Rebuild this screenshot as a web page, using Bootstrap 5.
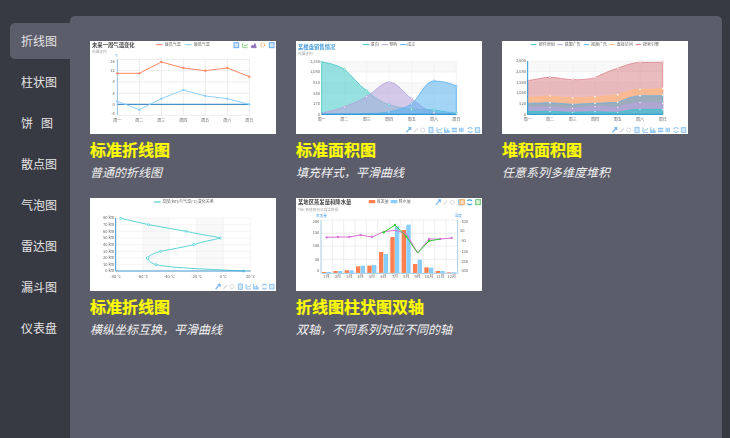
<!DOCTYPE html>
<html lang="zh">
<head>
<meta charset="utf-8">
<title>图表示例</title>
<link href="https://cdn.jsdelivr.net/npm/bootstrap@5.3.0/dist/css/bootstrap.min.css" rel="stylesheet">
<style>
html,body{height:100%;overflow:hidden}
body{background:#383a43;font-family:"Noto Sans CJK SC","Liberation Sans",sans-serif}
.shell{height:438px;width:730px;padding:16px 8px 0 0}
.side-rail{width:70px;padding:7px 0 0 10px;flex:none}
.side-link{display:block;width:60px;height:36px;line-height:36px;margin-bottom:5px;padding-left:11px;font-size:12px;color:#e4e4e4;border-radius:5px 0 0 5px;text-decoration:none;white-space:pre}
.side-link.current{background:#5c5d6a}
.main-panel{background:#5c5d6a;border-radius:5px 5px 0 0;width:652px;padding:25px 0 0 20px}
.chart-grid{display:grid;grid-template-columns:repeat(3,186px);column-gap:20px;row-gap:0}
.chart-item{height:157px}
.chart-pic{display:block;width:186px;height:93px;background:#fff;filter:blur(.3px)}
.chart-name{color:#ff0;font-size:16px;font-weight:700;line-height:22px;margin:4px 0 0;-webkit-text-stroke:.2px #ff0}
.chart-note{color:#f2f2f2;font-size:12px;font-style:italic;line-height:17px;margin:3px 0 0}
.chart-pic text{font-family:"Noto Sans CJK SC","Liberation Sans",sans-serif;font-size:12px;fill:#666}
.chart-pic text.ttl{font-size:16px;font-weight:700;fill:#444}
.chart-pic text.sub{font-size:11px;fill:#aaa}
.chart-pic text.ttl-blue{fill:#4a9fdc}
.chart-pic text.unit{font-size:11px;fill:#5aa6e6}
</style>
</head>
<body>
<svg width="0" height="0" class="d-block position-absolute">
<defs>
<g id="tools-a" fill="#d6e9fb" stroke="#92c6f2" stroke-width="3">
<path d="M2 16 14 3M8 2h7v7" fill="none" stroke="#7fb9ec" stroke-width="4"/><path d="M25 16 36 4" fill="none" stroke="#dcdcdc" stroke-width="4"/><circle cx="51" cy="9" r="6" fill="none" stroke="#dcdcdc"/>
<rect x="70" y="1" width="12" height="16"/>
</g>
<g id="tools-b" fill="none" stroke="#92c6f2" stroke-width="3">
<path d="M1 1v15h15M3 12l5-5 3 3 5-7"/><path d="M24 1v15h15M28 15V8M33 15V4M37 15V10" stroke-width="3.5"/>
</g>
<g id="tools-c" fill="none" stroke="#92c6f2" stroke-width="3.5">
<path d="M0 4h16M0 9h16M0 14h16"/><path d="M24 2v14M29 2v14M34 2v14"/>
</g>
<g id="tools-d" fill="none" stroke="#92c6f2" stroke-width="3">
<path d="M2 6a7 7 0 0 1 13 0M15 12a7 7 0 0 1-13 0" stroke-width="3.5"/><rect x="24" y="2" width="13" height="14" fill="#d6e9fb"/>
</g>
</defs>
</svg>
<div class="shell d-flex">
<nav class="side-rail">
<a class="side-link current" href="#">折线图</a>
<a class="side-link" href="#">柱状图</a>
<a class="side-link" href="#">饼&nbsp;&nbsp;&nbsp;图</a>
<a class="side-link" href="#">散点图</a>
<a class="side-link" href="#">气泡图</a>
<a class="side-link" href="#">雷达图</a>
<a class="side-link" href="#">漏斗图</a>
<a class="side-link" href="#">仪表盘</a>
</nav>
<main class="main-panel">
<div class="chart-grid">

<div class="chart-item">
<svg class="chart-pic" viewBox="270 123 558 279">
<g stroke="#e8e8e8" stroke-width="2.5" fill="none"><path d="M352 178H748M352 212H748M352 246H748M352 280H748M352 346H748M418 178V346M484 178V346M550 178V346M616 178V346M682 178V346M748 178V346"/></g>
<path d="M352 178V346" stroke="#8fc0e0" stroke-width="3"/>
<path d="M352 313H748" stroke="#4a90c4" stroke-width="3.5"/>
<path d="M352 220 418 220 484 186 550 204 616 212 682 204 748 230" fill="none" stroke="#ff8a65" stroke-width="3"/>
<g fill="#ff8a65"><circle cx="352" cy="220" r="3.5"/><circle cx="418" cy="220" r="3.5"/><circle cx="484" cy="186" r="3.5"/><circle cx="550" cy="204" r="3.5"/><circle cx="616" cy="212" r="3.5"/><circle cx="682" cy="204" r="3.5"/><circle cx="748" cy="230" r="3.5"/></g>
<path d="M352 304 418 329 484 296 550 270 616 288 682 296 748 313" fill="none" stroke="#90d0fa" stroke-width="3"/>
<g fill="#90d0fa"><circle cx="352" cy="304" r="3.5"/><circle cx="418" cy="329" r="3.5"/><circle cx="484" cy="296" r="3.5"/><circle cx="550" cy="270" r="3.5"/><circle cx="616" cy="288" r="3.5"/><circle cx="682" cy="296" r="3.5"/><circle cx="748" cy="313" r="3.5"/></g>
<text class="ttl" x="276" y="142">未来一周气温变化</text><text class="sub" x="276" y="160">纯属虚构</text>
<text class="unit" x="344" y="171">°C</text>
<path d="M468 134h20" stroke="#ff8a65" stroke-width="3"/><text x="494" y="139">最高气温</text>
<path d="M555 134h20" stroke="#90d0fa" stroke-width="3"/><text x="581" y="139">最低气温</text>
<g text-anchor="end"><text x="344" y="190">16</text><text x="344" y="216">12</text><text x="344" y="250">8</text><text x="344" y="284">4</text><text x="344" y="317">0</text><text x="344" y="345">-4</text></g>
<g text-anchor="middle"><text x="352" y="365">周一</text><text x="418" y="365">周二</text><text x="484" y="365">周三</text><text x="550" y="365">周四</text><text x="616" y="365">周五</text><text x="682" y="365">周六</text><text x="748" y="365">周日</text></g>
<rect x="702" y="128" width="14" height="15" fill="#cfe5fb" stroke="#6aaeea" stroke-width="3"/>
<path d="M728 128v15h15M731 139l4-4 3 3 5-7" fill="none" stroke="#8bdc8b" stroke-width="3"/>
<path d="M754 143v-4l4-4 3 3 4-8 4 13Z" fill="#8f6bb5" stroke="#8f6bb5" stroke-width="2"/>
<circle cx="788" cy="135" r="6" fill="none" stroke="#f0a860" stroke-width="3.5" stroke-dasharray="3 2"/>
<rect x="808" y="128" width="14" height="15" fill="#cfe5fb" stroke="#6aaeea" stroke-width="3"/>
</svg>
<h3 class="chart-name">标准折线图</h3>
<p class="chart-note">普通的折线图</p>
</div>

<div class="chart-item">
<svg class="chart-pic" viewBox="18 33 558 279">
<path d="M95 94H499V126H95ZM95 158H499V190H95Z" fill="#f8f8f8"/>
<g stroke="#eee" stroke-width="2" fill="none"><path d="M95 94H499M95 126H499M95 158H499M95 190H499M95 222H499M163 94V253M230 94V253M297 94V253M365 94V253M432 94V253M499 94V253"/></g>
<path d="M95 96C125 100 145 108 163 118C185 135 205 165 230 182C255 202 275 218 297 224C325 232 345 236 365 238C390 239 410 238 432 240C460 244 480 248 499 250V253H95Z" fill="#5fd3cf" fill-opacity=".65" stroke="#45c8c4" stroke-width="2.5"/>
<path d="M95 250C120 244 140 238 163 231C185 222 208 212 230 200C255 185 275 157 297 157C325 157 340 190 365 206C390 226 410 242 432 248C460 250 480 250 499 250V253H95Z" fill="#b9a6dc" fill-opacity=".6" stroke="#b6a2de" stroke-width="2.5"/>
<path d="M95 253 163 252C185 252 210 252 230 251C255 250 275 250 297 246C325 240 345 234 365 222C390 200 405 153 432 153C460 153 480 160 499 168V253H95Z" fill="#5ab1ef" fill-opacity=".55" stroke="#5ab1ef" stroke-width="2.5"/>
<g fill="#fff" stroke="#45c8c4" stroke-width="2"><circle cx="95" cy="96" r="3"/><circle cx="163" cy="118" r="3"/><circle cx="230" cy="182" r="3"/><circle cx="297" cy="224" r="3"/><circle cx="365" cy="238" r="3"/><circle cx="432" cy="240" r="3"/><circle cx="499" cy="250" r="3"/></g>
<g fill="#fff" stroke="#b6a2de" stroke-width="2"><circle cx="163" cy="231" r="3"/><circle cx="230" cy="200" r="3"/><circle cx="297" cy="157" r="3"/><circle cx="365" cy="206" r="3"/><circle cx="432" cy="248" r="3"/></g>
<g fill="#fff" stroke="#5ab1ef" stroke-width="2"><circle cx="297" cy="246" r="3"/><circle cx="365" cy="222" r="3"/><circle cx="432" cy="153" r="3"/><circle cx="499" cy="168" r="3"/></g>
<path d="M95 253H499" stroke="#2b9bd8" stroke-width="4"/>
<text class="ttl ttl-blue" x="24" y="56">某楼盘销售情况</text><text class="sub" x="24" y="75">纯属虚构</text>
<path d="M218 44h20" stroke="#45c8c4" stroke-width="3"/><text x="242" y="49">意向</text>
<path d="M275 44h20" stroke="#b6a2de" stroke-width="3"/><text x="298" y="49">预购</text>
<path d="M330 44h20" stroke="#5ab1ef" stroke-width="3"/><text x="352" y="49">成交</text>
<g text-anchor="end"><text x="90" y="98">1,350</text><text x="90" y="130">1,080</text><text x="90" y="162">810</text><text x="90" y="194">540</text><text x="90" y="225">270</text><text x="90" y="257">0</text></g>
<g text-anchor="middle"><text x="95" y="274">周一</text><text x="163" y="274">周二</text><text x="230" y="274">周三</text><text x="297" y="274">周四</text><text x="365" y="274">周五</text><text x="432" y="274">周六</text><text x="499" y="274">周日</text></g>
<use href="#tools-a" x="347" y="291"/><use href="#tools-b" x="440" y="291"/><use href="#tools-c" x="485" y="291"/><use href="#tools-d" x="532" y="291"/>
</svg>
<h3 class="chart-name">标准面积图</h3>
<p class="chart-note">填充样式，平滑曲线</p>
</div>

<div class="chart-item">
<svg class="chart-pic" viewBox="21 33 558 279">
<path d="M98 93H503V125H98ZM98 157H503V189H98Z" fill="#f8f8f8"/>
<g stroke="#eee" stroke-width="2" fill="none"><path d="M98 93H503M98 125H503M98 157H503M98 189H503M98 221H503M165 93V253M233 93V253M300 93V253M368 93V253M435 93V253M503 93V253"/></g>
<path d="M98 152C125 148 145 142 165 142C190 142 210 149 233 149C260 150 280 148 300 143C325 130 345 122 368 115C390 106 412 98 435 97H503V253H98Z" fill="#d87a80" fill-opacity=".5" stroke="#d87a80" stroke-width="2"/>
<path d="M98 203C125 200 145 198 165 198C190 200 210 204 233 204C260 204 280 201 300 200C325 199 345 197 368 194C390 186 412 178 435 178C460 178 480 177 503 175V253H98Z" fill="#ffb980" fill-opacity=".7" stroke="#ffb980" stroke-width="2"/>
<path d="M98 220 165 218 233 223 300 220 368 217C390 208 412 198 435 197H503V253H98Z" fill="#7fa8c8" fill-opacity=".75" stroke="#5ab1ef" stroke-width="2"/>
<path d="M98 232 165 232 233 235 300 229 368 232C390 226 412 218 435 218H503V253H98Z" fill="#b6a2de" fill-opacity=".7" stroke="#b6a2de" stroke-width="2"/>
<path d="M98 244 165 244 233 247 300 245 368 247C390 243 412 238 435 238H503V253H98Z" fill="#2ec7c9" fill-opacity=".6" stroke="#2ec7c9" stroke-width="2"/>
<g fill="#fff"><circle cx="98" cy="152" r="3" stroke="#d87a80"/><circle cx="165" cy="142" r="3" stroke="#d87a80"/><circle cx="233" cy="149" r="3" stroke="#d87a80"/><circle cx="300" cy="143" r="3" stroke="#d87a80"/><circle cx="368" cy="115" r="3" stroke="#d87a80"/><circle cx="435" cy="97" r="3" stroke="#d87a80"/><circle cx="503" cy="96" r="3" stroke="#d87a80"/>
<circle cx="165" cy="198" r="2.5"/><circle cx="233" cy="204" r="2.5"/><circle cx="300" cy="200" r="2.5"/><circle cx="368" cy="194" r="2.5"/><circle cx="435" cy="178" r="2.5"/><circle cx="503" cy="175" r="2.5"/>
<circle cx="165" cy="218" r="2.5"/><circle cx="233" cy="223" r="2.5"/><circle cx="300" cy="220" r="2.5"/><circle cx="368" cy="217" r="2.5"/><circle cx="435" cy="197" r="2.5"/><circle cx="503" cy="195" r="2.5"/>
<circle cx="165" cy="232" r="2"/><circle cx="233" cy="235" r="2"/><circle cx="300" cy="229" r="2"/><circle cx="368" cy="232" r="2"/><circle cx="435" cy="218" r="2"/><circle cx="503" cy="220" r="2"/>
<circle cx="165" cy="244" r="2"/><circle cx="233" cy="247" r="2"/><circle cx="300" cy="245" r="2"/><circle cx="368" cy="247" r="2"/><circle cx="435" cy="238" r="2"/><circle cx="503" cy="239" r="2"/></g>
<path d="M98 93V253M98 253H503" stroke="#2b9bd8" stroke-width="3" fill="none"/>
<path d="M108 44h16" stroke="#2ec7c9" stroke-width="3"/><text x="131" y="49">邮件营销</text>
<path d="M187 44h16" stroke="#b6a2de" stroke-width="3"/><text x="209" y="49">联盟广告</text>
<path d="M266 44h16" stroke="#5ab1ef" stroke-width="3"/><text x="288" y="49">视频广告</text>
<path d="M343 44h16" stroke="#ffb980" stroke-width="3"/><text x="365" y="49">直接访问</text>
<path d="M422 44h16" stroke="#d87a80" stroke-width="3"/><text x="444" y="49">搜索引擎</text>
<g text-anchor="end"><text x="93" y="97">2,600</text><text x="93" y="129">2,080</text><text x="93" y="161">1,560</text><text x="93" y="193">1,040</text><text x="93" y="225">520</text><text x="93" y="257">0</text></g>
<g text-anchor="middle"><text x="98" y="274">周一</text><text x="165" y="274">周二</text><text x="233" y="274">周三</text><text x="300" y="274">周四</text><text x="368" y="274">周五</text><text x="435" y="274">周六</text><text x="503" y="274">周日</text></g>
<use href="#tools-a" x="350" y="291"/><use href="#tools-b" x="443" y="291"/><use href="#tools-c" x="489" y="291"/><use href="#tools-d" x="535" y="291"/>
</svg>
<h3 class="chart-name">堆积面积图</h3>
<p class="chart-note">任意系列多维度堆积</p>
</div>

<div class="chart-item">
<svg class="chart-pic" viewBox="30 24 558 279">
<path d="M189 84H268V243H189ZM350 84H430V243H350Z" fill="#f9f9f9"/>
<g stroke="#f0f0f0" stroke-width="2" fill="none"><path d="M107 84H512M107 104H512M107 124H512M107 144H512M107 164H512M107 184H512M107 204H512M107 224H512M189 84V243M268 84V243M350 84V243M430 84V243M512 84V243"/></g>
<path d="M122 85 206 104 318 124C370 135 410 140 421 144C400 150 365 155 341 164C310 172 270 178 242 184C220 190 205 198 203 204C205 214 215 220 228 224C280 235 400 238 491 243" fill="none" stroke="#5cd6d3" stroke-width="3"/>
<g fill="#fff" stroke="#2ec7c9" stroke-width="2"><circle cx="122" cy="85" r="3"/><circle cx="206" cy="104" r="3"/><circle cx="318" cy="124" r="3"/><circle cx="421" cy="144" r="3"/><circle cx="341" cy="164" r="3"/><circle cx="242" cy="184" r="3"/><circle cx="203" cy="204" r="4"/><circle cx="228" cy="224" r="3"/><circle cx="491" cy="243" r="3"/></g>
<path d="M107 84V243H512" fill="none" stroke="#3f94d0" stroke-width="3"/>
<path d="M222 36h20" stroke="#2ec7c9" stroke-width="3"/><text x="247" y="40">高度(km)与气温(°C)变化关系</text>
<g text-anchor="end"><text x="103" y="88">80 km</text><text x="103" y="108">70 km</text><text x="103" y="128">60 km</text><text x="103" y="148">50 km</text><text x="103" y="168">40 km</text><text x="103" y="188">30 km</text><text x="103" y="208">20 km</text><text x="103" y="228">10 km</text><text x="103" y="247">0 km</text></g>
<g text-anchor="middle"><text x="107" y="264">-80 °C</text><text x="189" y="264">-60 °C</text><text x="268" y="264">-40 °C</text><text x="350" y="264">-20 °C</text><text x="430" y="264">0 °C</text><text x="512" y="264">20 °C</text></g>
<use href="#tools-a" x="405" y="281"/><use href="#tools-b" x="497" y="281"/><use href="#tools-d" x="545" y="281"/>
</svg>
<h3 class="chart-name">标准折线图</h3>
<p class="chart-note">横纵坐标互换，平滑曲线</p>
</div>

<div class="chart-item">
<svg class="chart-pic" viewBox="18 24 558 279">
<g stroke="#e6e6e6" stroke-width="2" fill="none"><path d="M93 90H503M93 130H503M93 168H503M93 208H503M127 90V250M161 90V250M195 90V250M229 90V250M263 90V250M298 90V250M332 90V250M366 90V250M400 90V250M434 90V250M468 90V250"/></g>
<g fill="#ff7f50"><rect x="96" y="246" width="13" height="3"/><rect x="130" y="243" width="13" height="6"/><rect x="164" y="241" width="13" height="8"/><rect x="198" y="229" width="13" height="20"/><rect x="232" y="227" width="13" height="22"/><rect x="267" y="186" width="13" height="63"/><rect x="301" y="141" width="13" height="108"/><rect x="335" y="120" width="13" height="129"/><rect x="369" y="222" width="13" height="27"/><rect x="403" y="232" width="13" height="17"/><rect x="437" y="243" width="13" height="6"/><rect x="471" y="247" width="13" height="2"/></g>
<g fill="#87cefa"><rect x="110" y="246" width="13" height="3"/><rect x="144" y="243" width="13" height="6"/><rect x="178" y="241" width="13" height="8"/><rect x="212" y="227" width="13" height="22"/><rect x="246" y="225" width="13" height="24"/><rect x="281" y="192" width="13" height="57"/><rect x="315" y="109" width="13" height="140"/><rect x="349" y="104" width="13" height="145"/><rect x="383" y="209" width="13" height="40"/><rect x="417" y="233" width="13" height="16"/><rect x="451" y="243" width="13" height="6"/><rect x="485" y="247" width="13" height="2"/></g>
<path d="M110 142 144 141 178 141 212 135 246 141 281 125 315 121 349 131 383 189 417 147 451 147 485 144" fill="none" stroke="#da70d6" stroke-width="3"/>
<g fill="#da70d6"><circle cx="110" cy="142" r="3.5"/><circle cx="144" cy="141" r="3.5"/><circle cx="178" cy="141" r="3.5"/><circle cx="212" cy="135" r="3.5"/><circle cx="246" cy="141" r="3.5"/><circle cx="417" cy="147" r="3.5"/><circle cx="451" cy="147" r="3.5"/><circle cx="485" cy="144" r="3.5"/></g>
<path d="M281 127 315 105 349 140 383 189 417 153 451 147" fill="none" stroke="#32cd32" stroke-width="3"/>
<g fill="#32cd32"><circle cx="281" cy="127" r="3.5"/><circle cx="315" cy="105" r="3.5"/><circle cx="349" cy="140" r="3.5"/><circle cx="417" cy="153" r="3.5"/></g>
<path d="M93 90V250M503 90V250M93 250H503" stroke="#a8cbe4" stroke-width="3" fill="none"/>
<text class="ttl" x="24" y="42">某地区蒸发量和降水量</text><text class="sub" x="24" y="63">Y轴: 数值随机非真实数据</text>
<rect x="236" y="30" width="20" height="10" rx="2" fill="#ff7f50"/><text x="260" y="39">蒸发量</text>
<rect x="302" y="30" width="20" height="10" rx="2" fill="#87cefa"/><text x="326" y="39">降水量</text>
<text class="unit" x="78" y="80">蒸发量</text><text class="unit" x="494" y="80">温度</text>
<g text-anchor="end"><text x="88" y="99">200</text><text x="88" y="133">150</text><text x="88" y="172">100</text><text x="88" y="212">50</text><text x="88" y="246">0</text></g>
<g text-anchor="start"><text x="510" y="99">-100</text><text x="510" y="126">50</text><text x="510" y="157">-50</text><text x="510" y="189">-150</text><text x="510" y="220">-250</text><text x="510" y="245">-300</text></g>
<g text-anchor="middle"><text x="110" y="265">1月</text><text x="144" y="265">2月</text><text x="178" y="265">3月</text><text x="212" y="265">4月</text><text x="246" y="265">5月</text><text x="281" y="265">6月</text><text x="315" y="265">7月</text><text x="349" y="265">8月</text><text x="383" y="265">9月</text><text x="417" y="265">10月</text><text x="451" y="265">11月</text><text x="485" y="265">12月</text></g>
<use href="#tools-a" x="436" y="28"/>
<rect x="510" y="29" width="13" height="15" fill="#fbdcc0" stroke="#f0a860" stroke-width="3"/>
<path d="M532 33a8 7 0 0 1 14 0M546 41a8 7 0 0 1-14 0" fill="none" stroke="#4aa3e0" stroke-width="3.5"/>
<rect x="557" y="29" width="14" height="15" fill="#d8f2d8" stroke="#6cc56c" stroke-width="3"/>
</svg>
<h3 class="chart-name">折线图柱状图双轴</h3>
<p class="chart-note">双轴，不同系列对应不同的轴</p>
</div>

</div>
</main>
</div>
</body>
</html>
